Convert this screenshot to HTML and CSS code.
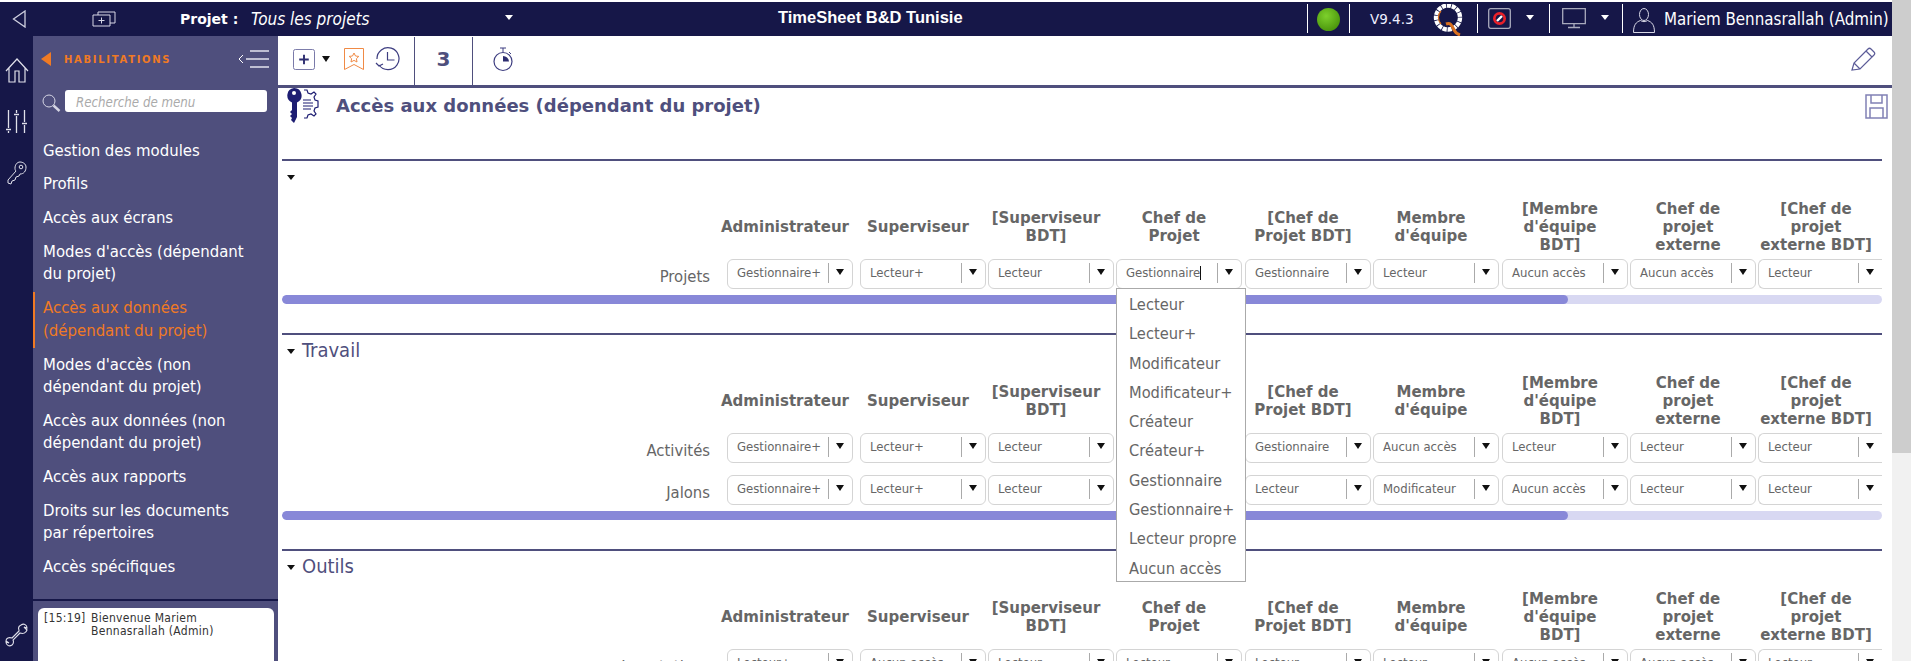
FILE: index.html
```html
<!DOCTYPE html>
<html lang="fr">
<head>
<meta charset="utf-8">
<title>TimeSheet B&amp;D Tunisie</title>
<link rel="stylesheet" href="styles.css">
</head>
<body>
<div class="page">
  <div class="app">
    <header class="topbar">
      <div class="tb-left">
        <svg class="ic-back" viewBox="0 0 14 18"><path d="M13 1 1.500 9 13 17Z" fill="none" stroke="#cfd0df" stroke-width="1.300"/></svg>
        <svg class="ic-add" viewBox="0 0 24 16"><path d="M6 4V1h17v11h-5M1 4h17v11H1zM9.500 6.500v6M6.500 9.500h6" fill="none" stroke="#d8d8e6"/></svg>
        <span class="prj-label">Projet :</span>
        <span class="prj-value">Tous les projets</span>
        <span class="caret-w prj-caret"></span>
      </div>
      <div class="app-title">TimeSheet B&amp;D Tunisie</div>
      <div class="tb-right">
        <span class="tsep"></span>
        <span class="ball"></span>
        <span class="tsep sep-b"></span>
        <span class="version">V9.4.3</span>
        <svg class="ic-q" viewBox="0 0 32 32"><circle cx="15" cy="13.500" r="12" fill="none" stroke="#fff" stroke-width="4.400" stroke-dasharray="4.200 .8"/><path d="M8 20a9.500 9.500 0 0 1 0-13" fill="none" stroke="#d9701e" stroke-width="1.200"/><path d="M13 20c5-2 6 2 8 6 1 2 3 4 6 5" fill="none" stroke="#d9701e" stroke-width="3"/></svg>
        <span class="tsep sep-c"></span>
        <svg class="ic-red" viewBox="0 0 23 21"><rect x=".7" y=".7" width="21.600" height="19.600" rx="2" fill="none" stroke="#a9aabd" stroke-width="1.300"/><circle cx="11.500" cy="10.500" r="6.500" fill="#e8202a"/><circle cx="11.500" cy="10.500" r="3.800" fill="#161748"/><path d="m9 13 5-5" stroke="#fff" stroke-width="2.400"/></svg>
        <span class="caret-w c1"></span>
        <span class="tsep sep-d"></span>
        <svg class="ic-mon" viewBox="0 0 24 21"><path d="M.700.700h22.600v15H.700zM12 16v3M6 19.500h12" fill="none" stroke="#a9aabd" stroke-width="1.300"/></svg>
        <span class="caret-w c2"></span>
        <span class="tsep sep-e"></span>
        <svg class="ic-user" viewBox="0 0 22 25"><ellipse cx="11" cy="6.500" rx="4.500" ry="6" fill="none" stroke="#d8d8e6"/><path d="M7.500 12.500C3 14 .5 17 .5 24.500h21c0-7.500-2.500-10.500-7-12-2 1.500-5 1.500-7 0Z" fill="none" stroke="#d8d8e6"/></svg>
        <span class="username">Mariem Bennasrallah (Admin)</span>
      </div>
    </header>
    <div class="body">
      <nav class="rail">
        <svg class="r-home" viewBox="0 0 24 25"><path d="M1 13 12 1l11 12M4 10v14h6V13h4v11h6V10" fill="none" stroke="#e0e0ea" stroke-width="1.200"/></svg>
        <svg class="r-sliders" viewBox="0 0 21 23"><path d="M2.500 0v18M2.500 21v2M10.500 0v3M10.500 6v17M18.500 0v12M18.500 15v8M0 19.500h5M8 4.500h5M16 13.500h5" fill="none" stroke="#e0e0ea" stroke-width="1.300"/></svg>
        <svg class="r-key" viewBox="0 0 20 24"><path d="M9 10 1 19v3l3 1 1-3 3-1 1-3 3-1 1-2c4 0 6-3 6-7 0-3-3-5-6-5S8 4 8 7c0 1 0 2 1 3Z" fill="none" stroke="#e0e0ea"/><circle cx="14" cy="6" r="1.800" fill="none" stroke="#e0e0ea"/></svg>
        <span class="rail-fill"></span>
        <svg class="r-wrench" viewBox="0 0 24 25"><path d="M14 9 7 16c-3-1-6 0-6 3l3 2-3-1c0 3 3 5 6 3 1-1 2-3 1-5l7-7c3 1 6 0 7-3l-3-3 3 1c0-3-3-5-6-3-2 1-3 3-2 5Z" fill="none" stroke="#e0e0ea" stroke-width="1.100"/></svg>
      </nav>
      <aside class="sidebar">
        <div class="side-head">
          <span class="side-caret"></span>
          <span class="side-title">HABILITATIONS</span>
          <svg class="side-toggle" viewBox="0 0 32 20"><path d="M5 6 1 10l4 4" fill="none" stroke="#fff"/><path d="M12 2h19M8 10h23M12 18h19" stroke="#e4e4ee" stroke-width="1.400"/></svg>
        </div>
        <div class="side-search">
          <svg class="ic-search" viewBox="0 0 19 18"><circle cx="7" cy="7" r="6" fill="none" stroke="#d5d5e4"/><path d="m11.500 11.500 6 5.500" stroke="#d5d5e4" stroke-width="2.400"/></svg>
          <div class="search-box">Recherche de menu</div>
        </div>
        <ul class="menu">
          <li>Gestion des modules</li>
          <li>Profils</li>
          <li>Accès aux écrans</li>
          <li>Modes d'accès (dépendant du projet)</li>
          <li class="active">Accès aux données (dépendant du projet)</li>
          <li>Modes d'accès (non dépendant du projet)</li>
          <li>Accès aux données (non dépendant du projet)</li>
          <li>Accès aux rapports</li>
          <li>Droits sur les documents par répertoires</li>
          <li>Accès spécifiques</li>
        </ul>
        <div class="messages">
          <div class="msg-box">
            <span class="msg-time">[15:19]</span>
            <span class="msg-text">Bienvenue Mariem<br>Bennasrallah (Admin)</span>
          </div>
        </div>
      </aside>
      <main class="main">
        <div class="toolbar">
          <svg class="t-plus" viewBox="0 0 23 22"><rect x=".5" y=".5" width="22" height="21" rx="2" fill="none" stroke="#7373a5"/><path d="M11.500 6v10M6.500 11h10" stroke="#2d2d70" stroke-width="2"/></svg>
          <span class="caret-b t-caret"></span>
          <svg class="t-mark" viewBox="0 0 20 22"><path d="M.5.500h19v21l-9.500-5-9.500 5Z" fill="none" stroke="#f08a45"/><path d="m10 5 1.500 3 3.300.4-2.400 2.300.6 3.300-3-1.600-3 1.600.6-3.300-2.400-2.300 3.300-.4Z" fill="none" stroke="#f08a45"/></svg>
          <svg class="t-hist" viewBox="0 0 25 24"><path d="M4 18a11 11 0 1 0-2-6M12.500 5v8h7M1 16l3 3 4-2" fill="none" stroke="#3d3d80" stroke-width="1.200"/></svg>
          <span class="t-sep s1"></span>
          <span class="t-count">3</span>
          <span class="t-sep s2"></span>
          <svg class="t-watch" viewBox="0 0 21 25"><circle cx="10" cy="14.500" r="9" fill="none" stroke="#3d3d80" stroke-width="1.200"/><path d="M7 1h6M10 1v4M16 5l2 2" stroke="#3d3d80" fill="none"/><path d="M10 14.500V9a6 6 0 0 1 6 5.500Z" fill="#2d2d70"/></svg>
          <span class="t-fill"></span>
          <svg class="t-pen" viewBox="0 0 25 24"><path d="m1 23 2-7L17 2c1-1 2-1 3 0l3 3c1 1 1 2 0 3L9 22ZM3 16l6 6M15 4l6 6" fill="none" stroke="#5c5c98" stroke-width="1.200"/></svg>
        </div>
        <div class="content">
          <div class="page-head">
            <svg class="p-icon" viewBox="0 0 34 37"><path d="M8 0a7.500 7.500 0 0 1 3 14.400V29l-3 6-3-3 1-2-2-2 2-2-2-2 2-2V14.400A7.500 7.500 0 0 1 8 0Z" fill="#1d1d72"/><circle cx="8" cy="5" r="2" fill="#fff"/><path d="M18 2h3l1 3 3 1 3-2 2 2-2 3 1 3 3 1v6l-3 1-1 3 2 3-2 2-3-2-3 1-1 3h-3M17 12h8M17 15h10M17 18h10M17 21h8" fill="none" stroke="#1d1d72" stroke-width="1.200"/></svg>
            <h1 class="page-title">Accès aux données (dépendant du projet)</h1>
            <svg class="p-save" viewBox="0 0 23 25"><path d="M1 1h21v23H1zM6 1v8h11V1M5 24V14h13v10" fill="none" stroke="#8181b5" stroke-width="1.500"/></svg>
          </div>

          <section class="sec">
            <h2 class="sec-title"><span class="caret-b"></span></h2>
            <div class="grid">
              <div class="hd-first"></div>
              <div class="hd">Administrateur</div><div class="hd">Superviseur</div><div class="hd">[Superviseur BDT]</div><div class="hd">Chef de Projet</div><div class="hd">[Chef de Projet BDT]</div><div class="hd">Membre d'équipe</div><div class="hd">[Membre d'équipe BDT]</div><div class="hd">Chef de projet externe</div><div class="hd">[Chef de projet externe BDT]</div>
              <div class="lbl">Projets</div>
              <div class="sel"><span class="val">Gestionnaire+</span><i class="btn"></i></div><div class="sel"><span class="val">Lecteur+</span><i class="btn"></i></div><div class="sel"><span class="val">Lecteur</span><i class="btn"></i></div>
              <div class="sel"><span class="val val-focus">Gestionnaire</span><i class="btn"></i>
                <ul class="drop">
                  <li>Lecteur</li><li>Lecteur+</li><li>Modificateur</li><li>Modificateur+</li><li>Créateur</li><li>Créateur+</li><li>Gestionnaire</li><li>Gestionnaire+</li><li>Lecteur propre</li><li>Aucun accès</li>
                </ul>
              </div>
              <div class="sel"><span class="val">Gestionnaire</span><i class="btn"></i></div><div class="sel"><span class="val">Lecteur</span><i class="btn"></i></div><div class="sel"><span class="val">Aucun accès</span><i class="btn"></i></div><div class="sel"><span class="val">Aucun accès</span><i class="btn"></i></div><div class="sel"><span class="val">Lecteur</span><i class="btn"></i></div>
            </div>
            <div class="bar"><span class="bar-fill"></span></div>
          </section>

          <section class="sec">
            <h2 class="sec-title"><span class="caret-b"></span>Travail</h2>
            <div class="grid">
              <div class="hd-first"></div>
              <div class="hd">Administrateur</div><div class="hd">Superviseur</div><div class="hd">[Superviseur BDT]</div><div class="hd">Chef de Projet</div><div class="hd">[Chef de Projet BDT]</div><div class="hd">Membre d'équipe</div><div class="hd">[Membre d'équipe BDT]</div><div class="hd">Chef de projet externe</div><div class="hd">[Chef de projet externe BDT]</div>
              <div class="lbl">Activités</div>
              <div class="sel"><span class="val">Gestionnaire+</span><i class="btn"></i></div><div class="sel"><span class="val">Lecteur+</span><i class="btn"></i></div><div class="sel"><span class="val">Lecteur</span><i class="btn"></i></div><div class="sel"><span class="val">Lecteur</span><i class="btn"></i></div><div class="sel"><span class="val">Gestionnaire</span><i class="btn"></i></div><div class="sel"><span class="val">Aucun accès</span><i class="btn"></i></div><div class="sel"><span class="val">Lecteur</span><i class="btn"></i></div><div class="sel"><span class="val">Lecteur</span><i class="btn"></i></div><div class="sel"><span class="val">Lecteur</span><i class="btn"></i></div>
              <div class="lbl">Jalons</div>
              <div class="sel"><span class="val">Gestionnaire+</span><i class="btn"></i></div><div class="sel"><span class="val">Lecteur+</span><i class="btn"></i></div><div class="sel"><span class="val">Lecteur</span><i class="btn"></i></div><div class="sel"><span class="val">Lecteur</span><i class="btn"></i></div><div class="sel"><span class="val">Lecteur</span><i class="btn"></i></div><div class="sel"><span class="val">Modificateur</span><i class="btn"></i></div><div class="sel"><span class="val">Aucun accès</span><i class="btn"></i></div><div class="sel"><span class="val">Lecteur</span><i class="btn"></i></div><div class="sel"><span class="val">Lecteur</span><i class="btn"></i></div>
            </div>
            <div class="bar"><span class="bar-fill"></span></div>
          </section>

          <section class="sec">
            <h2 class="sec-title"><span class="caret-b"></span>Outils</h2>
            <div class="grid">
              <div class="hd-first"></div>
              <div class="hd">Administrateur</div><div class="hd">Superviseur</div><div class="hd">[Superviseur BDT]</div><div class="hd">Chef de Projet</div><div class="hd">[Chef de Projet BDT]</div><div class="hd">Membre d'équipe</div><div class="hd">[Membre d'équipe BDT]</div><div class="hd">Chef de projet externe</div><div class="hd">[Chef de projet externe BDT]</div>
              <div class="lbl">Imputations</div>
              <div class="sel"><span class="val">Lecteur+</span><i class="btn"></i></div><div class="sel"><span class="val">Aucun accès</span><i class="btn"></i></div><div class="sel"><span class="val">Lecteur</span><i class="btn"></i></div><div class="sel"><span class="val">Lecteur</span><i class="btn"></i></div><div class="sel"><span class="val">Lecteur</span><i class="btn"></i></div><div class="sel"><span class="val">Lecteur</span><i class="btn"></i></div><div class="sel"><span class="val">Aucun accès</span><i class="btn"></i></div><div class="sel"><span class="val">Aucun accès</span><i class="btn"></i></div><div class="sel"><span class="val">Lecteur</span><i class="btn"></i></div>
            </div>
          </section>
        </div>
      </main>
    </div>
  </div>
  <div class="scrollbar"><div class="thumb"></div></div>
</div>
</body>
</html>
```
FILE: styles.css
```css
* { box-sizing: border-box; }
html, body { margin: 0; height: 100%; overflow: hidden; }
body { font-family: "DejaVu Sans", sans-serif; background: #fff; }
ul { list-style: none; margin: 0; padding: 0; }
svg { display: block; flex: none; }

.page { display: flex; width: 1912px; height: 661px; overflow: hidden; }
.app { width: 1892px; display: flex; flex-direction: column; }
.scrollbar { width: 19px; background: #f1f1f1; }
.thumb { height: 453px; background: #cdcdcd; }

.topbar { display: flex; justify-content: space-between; align-items: center; height: 34px; margin-top: 2px; flex: none; background: #161748; color: #fff; position: relative; }
.tb-left { display: flex; align-items: center; height: 100%; }
.ic-back { width: 14px; height: 18px; margin-left: 12px; }
.ic-add { width: 24px; height: 16px; margin-left: 66px; }
.prj-label { font: bold 14px "DejaVu Sans", sans-serif; margin-left: 64px; width: 71px; white-space: nowrap; }
.prj-value { font-size: 17px; font-style: italic; font-stretch: condensed; width: 254px; white-space: nowrap; }
.prj-caret { margin-top: -4px; }
.caret-w { width: 0; height: 0; flex: none; border-left: 4px solid transparent; border-right: 4px solid transparent; border-top: 5px solid #fff; margin-top: -4px; }
.caret-b { display: inline-block; width: 0; height: 0; flex: none; border-left: 4px solid transparent; border-right: 4px solid transparent; border-top: 5px solid #111; }
.app-title { position: absolute; left: 778px; top: 6px; font: bold 16.500px "Liberation Sans", sans-serif; }
.tb-right { display: flex; align-items: center; height: 100%; padding-right: 4px; }
.tsep { width: 1px; height: 29px; background: #fff; margin-top: -1px; }
.ball { width: 23px; height: 23px; border-radius: 50%; margin-left: 9px; margin-top: 1px; background: radial-gradient(circle at 40% 35%, #7dd02c, #4b960d 75%); }
.sep-b { margin-left: 9px; }
.version { font-size: 13.500px; margin-left: 20px; width: 45px; color: #eef; white-space: nowrap; }
.ic-q { width: 32px; height: 32px; margin-left: 18px; margin-top: 1px; }
.sep-c { margin-left: 12px; }
.ic-red { width: 23px; height: 21px; margin-left: 10px; margin-top: -1px; }
.c1 { margin-left: 15px; }
.sep-d { margin-left: 15px; }
.ic-mon { width: 24px; height: 21px; margin-left: 12px; margin-top: -1px; }
.c2 { margin-left: 15px; }
.sep-e { margin-left: 13px; }
.ic-user { width: 22px; height: 25px; margin-left: 10px; margin-top: 2px; }
.username { font-size: 16.800px; font-stretch: condensed; margin-left: 9px; width: 224px; white-space: nowrap; }

.body { display: flex; flex: 1; min-height: 0; }
.rail { width: 33px; flex: none; background: #161748; display: flex; flex-direction: column; align-items: center; }
.r-home { width: 24px; height: 25px; margin-top: 22px; }
.r-sliders { width: 21px; height: 23px; margin-top: 27px; }
.r-key { width: 20px; height: 24px; margin-top: 28px; }
.rail-fill { flex: 1; }
.r-wrench { width: 24px; height: 25px; margin-bottom: 14px; }

.sidebar { width: 245px; flex: none; background: #4f4f7d; color: #fff; display: flex; flex-direction: column; }
.side-head { display: flex; align-items: center; height: 46px; padding: 0 8px 0 8px; }
.side-caret { width: 0; height: 0; border-top: 7px solid transparent; border-bottom: 7px solid transparent; border-right: 10px solid #f07a24; }
.side-title { font: bold 10px "DejaVu Sans", sans-serif; letter-spacing: 1.700px; color: #f07a24; margin-left: 13px; flex: 1; }
.side-toggle { width: 32px; height: 22px; }
.side-search { display: flex; align-items: center; margin-top: 8px; height: 22px; padding-left: 9px; }
.ic-search { width: 19px; height: 18px; margin-top: 3px; }
.search-box { width: 202px; height: 22px; margin-left: 4px; border-radius: 3px; background: #fff; color: #aaa; font-size: 13.200px; font-style: italic; font-stretch: condensed; line-height: 22px; padding: 2px 0 0 11px; white-space: nowrap; }
.menu { margin-top: 22px; flex: 1; }
.menu li { font-size: 16.600px; font-stretch: condensed; line-height: 22.500px; padding: 5.650px 25px 5.650px 10px; }
.menu li.active { color: #f07a24; border-left: 2px solid #f07a24; padding-left: 8px; }
.messages { height: 62px; border-top: 2px solid #161748; padding: 7px 4px 0 5px; flex: none; }
.msg-box { height: 60px; background: #fff; border-radius: 6px 6px 0 0; color: #333; font-size: 12px; font-stretch: condensed; letter-spacing: .3px; line-height: 13px; display: flex; padding: 4px 6px; }
.msg-time { width: 47px; flex: none; }

.main { flex: 1; min-width: 0; display: flex; flex-direction: column; }
.toolbar { height: 52px; flex: none; border-bottom: 3px solid #4f4f7d; display: flex; align-items: center; padding: 0 16px 3px 15px; }
.t-plus { width: 22px; height: 21px; }
.t-caret { margin-left: 7px; border-top-width: 6px; }
.t-mark { width: 20px; height: 22px; margin-left: 14px; }
.t-hist { width: 25px; height: 24px; margin-left: 11px; }
.t-sep { width: 1px; height: 48px; background: #4f4f7d; margin-top: 3px; }
.s1 { margin-left: 14px; }
.t-count { width: 57px; text-align: center; font-size: 20px; font-weight: bold; color: #4f4f7d; }
.t-watch { width: 21px; height: 25px; margin-left: 20px; }
.t-fill { flex: 1; }
.t-pen { width: 25px; height: 24px; }

.content { flex: 1; min-height: 0; padding: 0 10px 0 4px; overflow: hidden; }
.page-head { height: 71px; display: flex; }
.p-icon { width: 34px; height: 37px; margin-left: 4px; }
.page-title { margin: 8px 0 0 16px; font-size: 18px; line-height: 20px; font-weight: bold; color: #4f4f7d; flex: 1; }
.p-save { width: 23px; height: 25px; margin: 6px -6px 0 0; }

.sec { border-top: 2px solid #4f4f7d; margin-bottom: 29px; }
.sec-title { height: 39px; margin: 0; font-size: 20px; font-weight: normal; line-height: 30px; font-stretch: condensed; color: #4f4f7d; padding-left: 5px; }
.sec-title .caret-b { margin-right: 7px; vertical-align: middle; }
.grid { display: grid; grid-template-columns: 445px 133px 128px 128px 129px 128px 129px 128px 128px 124px; grid-template-rows: 54px; grid-auto-rows: 30px; row-gap: 12px; }
.hd { width: 116px; height: 54px; padding: 0 2px; display: flex; align-items: center; justify-content: center; text-align: center; font-size: 15px; font-weight: bold; line-height: 18px; color: #666; }
.hd-first { height: 54px; }
.lbl { text-align: right; margin-top: -7px; padding: 8px 17px 0 0; font-size: 16.500px; font-stretch: condensed; color: #666; line-height: 20px; }
.sel { position: relative; width: 126px; height: 30px; margin-top: -7px; border: 1px solid #d4d4d4; border-radius: 6px; display: flex; font-stretch: condensed; background: #fff; }
.sel:nth-child(10n) { width: 124px; border-right: 0; border-radius: 6px 0 0 6px; }
.val { flex: 1; min-width: 0; padding-left: 9px; font-size: 13px; color: #666; line-height: 25px; white-space: nowrap; }
.val-focus::after { content: ""; display: inline-block; width: 1px; height: 14px; background: #111; vertical-align: -3px; }
.btn { width: 24px; flex: none; position: relative; margin: 3px 0 5px; border-left: 1px solid #aaa; }
.btn::after { content: ""; position: absolute; left: 7px; top: 6px; border-left: 4px solid transparent; border-right: 4px solid transparent; border-top: 6px solid #111; }

.drop { position: absolute; z-index: 5; left: -1px; top: 28px; width: 130px; height: 294px; background: #fff; border: 1px solid #aaa; padding: 1px 0 0 12px; font-size: 16.300px; color: #666; }
.drop li { height: 29.300px; line-height: 29px; white-space: nowrap; }

.bar { height: 9px; margin-top: -1px; border-radius: 5px; background: #d8d8f2; overflow: hidden; }
.bar-fill { display: block; width: 1286px; height: 100%; background: #8888d8; border-radius: 5px; }
```
